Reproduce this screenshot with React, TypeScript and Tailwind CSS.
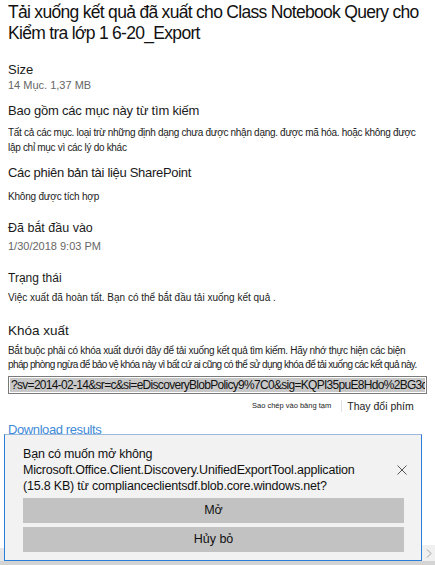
import React from "react";

const font = { fontFamily: '"Liberation Sans", Arial, sans-serif' };

export default function App() {
  return (
    <div className="relative w-[435px] h-[565px] overflow-hidden bg-white" style={font}>
      <div className="px-[8px] pt-[2px]">
        <h1 className="text-[17.5px] leading-[21px] tracking-[-0.7px] text-[#111]">
          Tải xuống kết quả đã xuất cho Class Notebook Query cho Kiểm tra lớp 1 6-20_Export
        </h1>

        <div className="mt-[18px] text-[13px] leading-[16px] text-[#1a1a1a]">Size</div>
        <div className="text-[11px] leading-[14px] text-[#666]">14 Mục. 1,37 MB</div>

        <div className="mt-[11px] text-[13px] leading-[16px] tracking-[-0.2px] text-[#1a1a1a]">
          Bao gồm các mục này từ tìm kiếm
        </div>
        <p className="mt-[6px] text-[10px] leading-[15px] tracking-[-0.3px] text-[#222]">
          Tất cả các mục. loại trừ những định dạng chưa được nhận dạng. được mã hóa. hoặc không được lập chỉ mục vì các lý do khác
        </p>

        <div className="mt-[10px] text-[13px] leading-[16px] tracking-[-0.3px] text-[#1a1a1a]">
          Các phiên bản tài liệu SharePoint
        </div>
        <p className="mt-[8px] text-[10px] leading-[15px] tracking-[-0.2px] text-[#222]">Không được tích hợp</p>

        <div className="mt-[16px] text-[12.5px] leading-[16px] text-[#1a1a1a]">Đã bắt đầu vào</div>
        <div className="mt-[3px] text-[11px] leading-[14px] text-[#666]">1/30/2018 9:03 PM</div>

        <div className="mt-[17px] text-[12px] leading-[16px] text-[#1a1a1a]">Trạng thái</div>
        <p className="mt-[4px] text-[10px] leading-[15px] text-[#222]">
          Việc xuất đã hoàn tất. Bạn có thể bắt đầu tải xuống kết quả .
        </p>

        <div className="mt-[17px] text-[13.5px] leading-[18px] text-[#1a1a1a]">Khóa xuất</div>
        <p className="mt-[4px] text-[10px] leading-[14px] text-[#222] whitespace-nowrap">
          <span className="tracking-[-0.3px]">
            Bắt buộc phải có khóa xuất dưới đây để tải xuống kết quả tìm kiếm. Hãy nhớ thực hiện các biện
          </span>
          <br />
          <span className="tracking-[-0.62px]">
            pháp phòng ngừa để bảo vệ khóa này vì bất cứ ai cũng có thể sử dụng khóa để tải xuống các kết quả này.
          </span>
        </p>
        <div className="mt-[4px] border border-[#7a7a7a] bg-white p-[1px] h-[18px] overflow-hidden">
          <div className="bg-[#c8c8c8] h-full text-[12px] leading-[14px] tracking-[-0.7px] whitespace-nowrap overflow-hidden text-[#111] pl-[1px]">
            ?sv=2014-02-14&amp;sr=c&amp;si=eDiscoveryBlobPolicy9%7C0&amp;sig=KQPI35puE8Hdo%2BG3c
          </div>
        </div>
        <div className="mt-[4px] h-[16px] flex items-center pl-[244px]">
          <span className="text-[7.5px] leading-[16px] text-[#222] whitespace-nowrap">Sao chép vào bảng tạm</span>
          <span className="ml-[10px] mr-[5px] w-px h-[12px] bg-[#e2e2e2]" />
          <span className="text-[10.5px] leading-[16px] text-[#222] whitespace-nowrap">Thay đổi phím</span>
        </div>

        <div className="mt-[8px] text-[13px] leading-[16px] tracking-[-0.4px] text-[#3f8ad6]">Download results</div>
      </div>

      {/* download prompt bar */}
      <div className="absolute left-[4px] top-[434px] w-[418px] h-[127px] bg-[#f2f2f2] border border-[#2b7fd8] border-t-[#9ab9dc]">
        <div className="relative pl-[18px] pr-[17px] pt-[11px]">
          <div className="text-[12.5px] leading-[16px] tracking-[-0.2px] text-[#111]">
            Bạn có muốn mở không
            <br />
            Microsoft.Office.Client.Discovery.UnifiedExportTool.application
            <br />
            (15.8 KB) từ complianceclientsdf.blob.core.windows.net?
          </div>
          <svg className="absolute right-[14px] top-[30px]" width="10" height="10" viewBox="0 0 10 10">
            <path d="M0.5 0.5 L9.5 9.5 M9.5 0.5 L0.5 9.5" stroke="#555" strokeWidth="1" />
          </svg>
          <div className="mt-[4px] flex flex-col gap-[4px]">
            <button className="h-[25px] bg-[#c2c2c2] text-[12.5px] text-[#111]">Mở</button>
            <button className="h-[25px] bg-[#c2c2c2] text-[12.5px] text-[#111]">Hủy bỏ</button>
          </div>
        </div>
      </div>

      {/* page scrollbar strip */}
      <div className="absolute left-0 top-[548px] w-[4px] h-[13px] bg-[#e6e6e6]" />
      <div className="absolute right-0 top-[545px] w-[13px] h-[16px] bg-[#f0f0f0] flex items-center justify-center">
        <svg width="6" height="9" viewBox="0 0 6 9">
          <path d="M1 0.5 L5 4.5 L1 8.5" stroke="#a0a0a0" fill="none" />
        </svg>
      </div>
      <div className="absolute left-0 bottom-0 w-full h-[4px] bg-[#d4d4d4]" />
    </div>
  );
}
